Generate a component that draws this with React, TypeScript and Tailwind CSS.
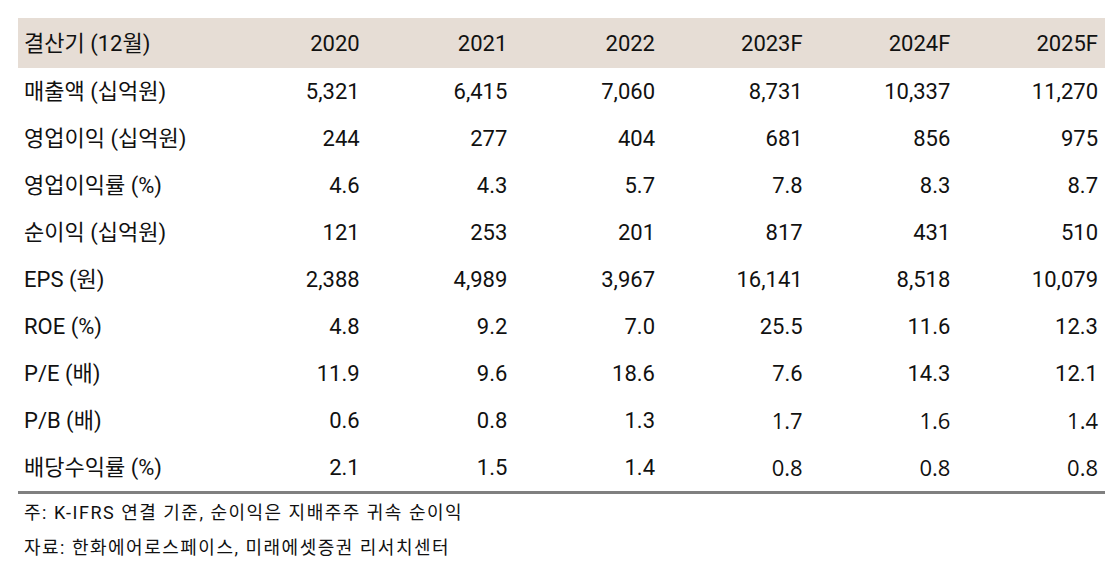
import React from "react";

const headers = ["2020", "2021", "2022", "2023F", "2024F", "2025F"];

type Row = { label: string; values: string[]; alt?: boolean[] };

const rows: Row[] = [
  { label: "매출액 (십억원)", values: ["5,321", "6,415", "7,060", "8,731", "10,337", "11,270"] },
  { label: "영업이익 (십억원)", values: ["244", "277", "404", "681", "856", "975"] },
  { label: "영업이익률 (%)", values: ["4.6", "4.3", "5.7", "7.8", "8.3", "8.7"] },
  { label: "순이익 (십억원)", values: ["121", "253", "201", "817", "431", "510"] },
  { label: "EPS (원)", values: ["2,388", "4,989", "3,967", "16,141", "8,518", "10,079"] },
  { label: "ROE (%)", values: ["4.8", "9.2", "7.0", "25.5", "11.6", "12.3"] },
  { label: "P/E (배)", values: ["11.9", "9.6", "18.6", "7.6", "14.3", "12.1"] },
  { label: "P/B (배)", values: ["0.6", "0.8", "1.3", "1.7", "1.6", "1.4"], alt: [false, false, false, true, true, true] },
  { label: "배당수익률 (%)", values: ["2.1", "1.5", "1.4", "0.8", "0.8", "0.8"], alt: [false, false, false, true, true, true] },
];

const base = "font-['Roboto','Noto_Sans_CJK_KR',sans-serif]";

export default function App() {
  return (
    <div className={`w-[1118px] h-[572px] bg-white text-[#111] ${base} pt-[18px] pl-[18px] pr-[13px]`}>
      <div className="grid grid-cols-[201px_repeat(6,1fr)] h-[50px] bg-[#e6ddd5] items-center text-[22px]">
        <div className="pl-[6px]">결산기 (12월)</div>
        {headers.map((h) => (
          <div key={h} className="text-right pr-[7px]">{h}</div>
        ))}
      </div>
      {rows.map((r) => (
        <div key={r.label} className="grid grid-cols-[201px_repeat(6,1fr)] h-[47px] items-center text-[22px]">
          <div className="pl-[6px]">{r.label}</div>
          {r.values.map((v, i) => (
            <div
              key={i}
              className={`text-right pr-[7px] ${r.alt && r.alt[i] ? "font-['Open_Sans',sans-serif]" : ""}`}
            >
              {v}
            </div>
          ))}
        </div>
      ))}
      <div className="h-[3px] bg-[#808080]" />
      <div className="pl-[6px] text-[18px] tracking-[1.5px] leading-[35px] pt-[1px]">
        <div>주: K-IFRS 연결 기준, 순이익은 지배주주 귀속 순이익</div>
        <div>자료: 한화에어로스페이스, 미래에셋증권 리서치센터</div>
      </div>
    </div>
  );
}
